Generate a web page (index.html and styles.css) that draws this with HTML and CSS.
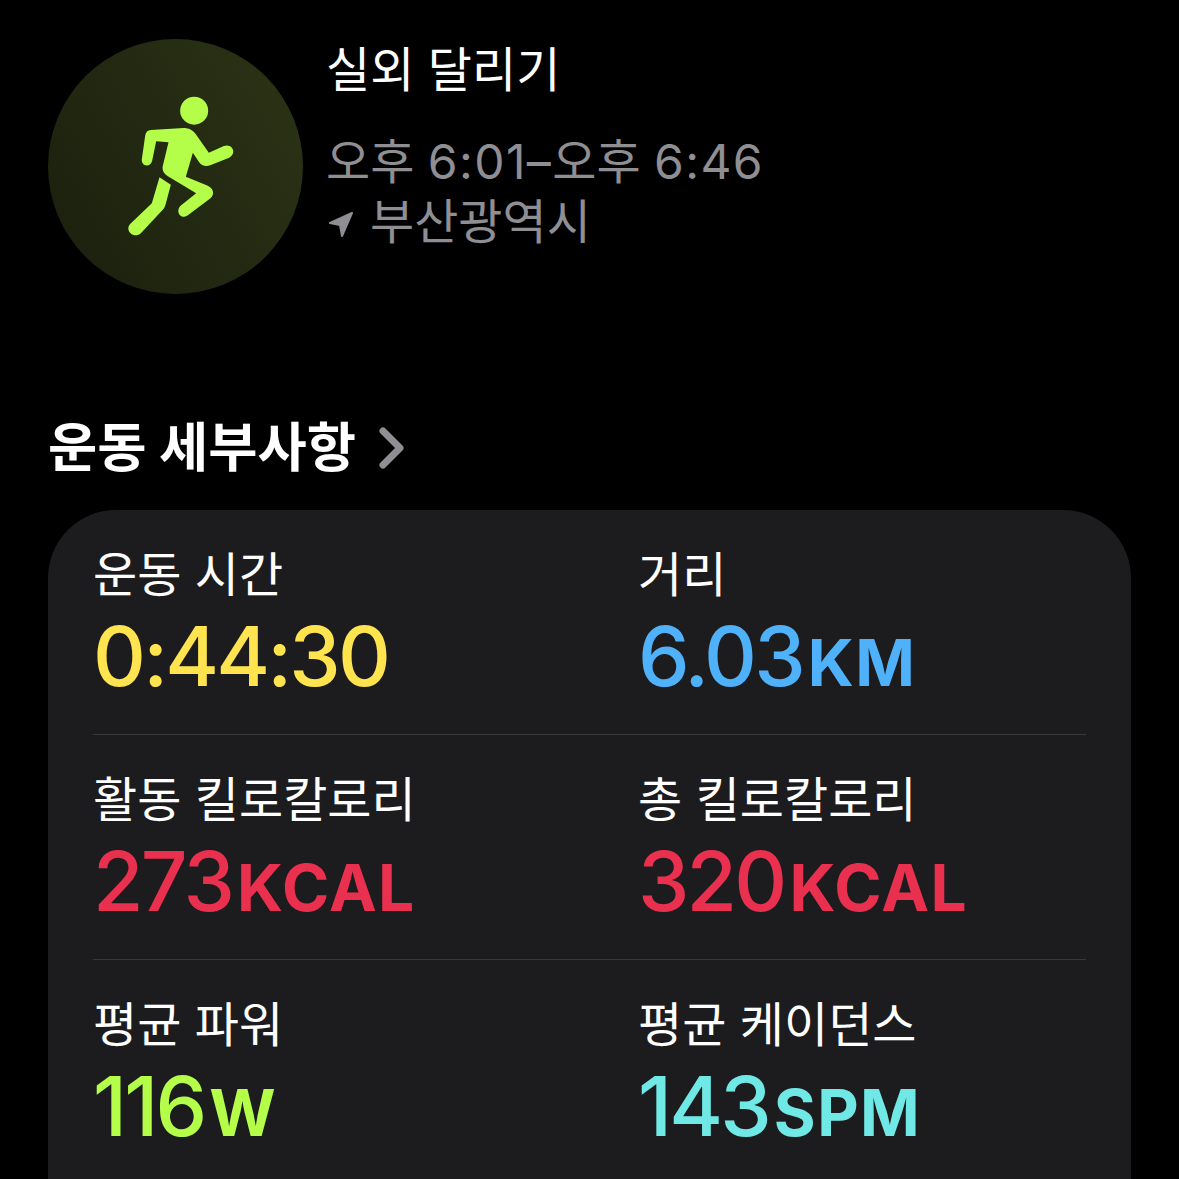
FILE: index.html
```html
<!DOCTYPE html>
<html>
<head>
  <title>실외 달리기</title>
  <link rel="stylesheet" href="styles.css">
</head>
<body>
  <div class="summary">
    <div class="badge">
      <svg class="runner" viewBox="255 190 335 435" width="112" height="145">
        <circle cx="462" cy="240" r="42" fill="#b4fd49"/>
        <path d="M332 298 L430 292 C446 292 458 298 467 311 L506 366 L551 346 C575 337 592 366 567 381 L510 404 C496 409 484 405 476 393 L458 366 L437 438 L503 465 C520 473 524 490 511 503 L441 555 C420 568 404 540 423 524 L468 488 L382 436 C370 428 365 418 368 405 L385 335 L348 332 L336 390 C330 412 303 408 305 386 L315 315 C317 304 322 299 332 298 Z" fill="#b4fd49"/>
        <path d="M358 440 L392 462 L376 522 C374 530 370 535 365 540 L302 608 C282 626 252 600 270 580 L335 518 Z" fill="#b4fd49"/>
      </svg>
    </div>
    <div class="info">
      <div class="info-title">실외 달리기</div>
      <div class="info-time">오후 <span class="num">6:01–</span>오후 <span class="num">6:46</span></div>
      <div class="info-place">
        <svg class="arrow" viewBox="0 0 26 30" width="26" height="30">
          <path d="M24 3 L2 13 L12 15 L14 26 Z" fill="#8e8e93" stroke="#8e8e93" stroke-width="2" stroke-linejoin="round"/>
        </svg>
        <span>부산광역시</span>
      </div>
    </div>
  </div>

  <div class="section-title">
    <span>운동 세부사항</span>
    <svg class="chevron" viewBox="0 0 26 42" width="26" height="42">
      <path d="M4 4 L21 21 L4 38" fill="none" stroke="#8e8e93" stroke-width="7" stroke-linecap="round" stroke-linejoin="round"/>
    </svg>
  </div>

  <div class="card">
    <div class="row">
      <div class="stat">
        <div class="label">운동 시간</div>
        <div class="value yellow">0:44:30</div>
      </div>
      <div class="stat">
        <div class="label">거리</div>
        <div class="value blue">6.03<span class="unit">KM</span></div>
      </div>
    </div>
    <div class="row">
      <div class="stat">
        <div class="label">활동 킬로칼로리</div>
        <div class="value red">273<span class="unit">KCAL</span></div>
      </div>
      <div class="stat">
        <div class="label">총 킬로칼로리</div>
        <div class="value red">320<span class="unit">KCAL</span></div>
      </div>
    </div>
    <div class="row">
      <div class="stat">
        <div class="label">평균 파워</div>
        <div class="value green">116<span class="unit">W</span></div>
      </div>
      <div class="stat">
        <div class="label">평균 케이던스</div>
        <div class="value cyan">143<span class="unit">SPM</span></div>
      </div>
    </div>
  </div>
</body>
</html>
```

FILE: styles.css
```css
html, body {
  height: 1179px;
  overflow: hidden;
}

body {
  font-family: Inter, "Noto Sans CJK KR", sans-serif;
  background-color: #000;
  color: #fff;
  margin: 0;
  padding: 39px 48px 0;
  box-sizing: border-box;
}

.summary {
  display: flex;
  gap: 23px;
}

.badge {
  width: 255px;
  height: 255px;
  border-radius: 50%;
  background: linear-gradient(60deg, #1a1f0d, #2c3416);
  display: flex;
  align-items: center;
  justify-content: center;
}

.runner {
  margin: -1px 0 0 11px;
}

.info {
  padding-top: 1px;
}

.info-title {
  font-size: 48px;
  line-height: 60px;
}

.info-time, .info-place {
  font-size: 48px;
  line-height: 60px;
  color: #8e8e93;
}

.info-time {
  margin-top: 32px;
}

.num {
  letter-spacing: 1.4px;
}

.info-place {
  display: flex;
  align-items: center;
  gap: 16px;
}

.arrow {
  margin: 6px 0 0 2px;
}

.section-title {
  display: flex;
  align-items: center;
  gap: 23px;
  font-size: 53.5px;
  font-weight: 700;
  line-height: 64px;
  margin-top: 122px;
}

/* the screen cuts the card off, so it has no bottom corners */
.card {
  background-color: #1c1c1e;
  border-radius: 68px 68px 0 0;
  margin: 30px 0 0;
  padding: 0 45px;
}

.row {
  display: grid;
  grid-template-columns: 545px 1fr;
  height: 225px;
  padding-top: 35px;
  box-sizing: border-box;
  border-bottom: 1px solid #38383a;
}

.row:last-child {
  height: 219px;
  border-bottom: none;
}

.label {
  font-size: 48px;
  line-height: 60px;
}

.value {
  font-size: 82px;
  font-weight: 550;
  letter-spacing: -2.8px;
  line-height: 84px;
  margin-top: 10px;
}

.unit {
  font-size: 64px;
  font-weight: 650;
  letter-spacing: 1.4px;
  margin-left: 5px;
}

.yellow { color: #ffe450; }
.blue { color: #4eb1fa; }
.red { color: #e9304f; }
.green { color: #b4fd49; }
.cyan { color: #70e8e5; }
```
